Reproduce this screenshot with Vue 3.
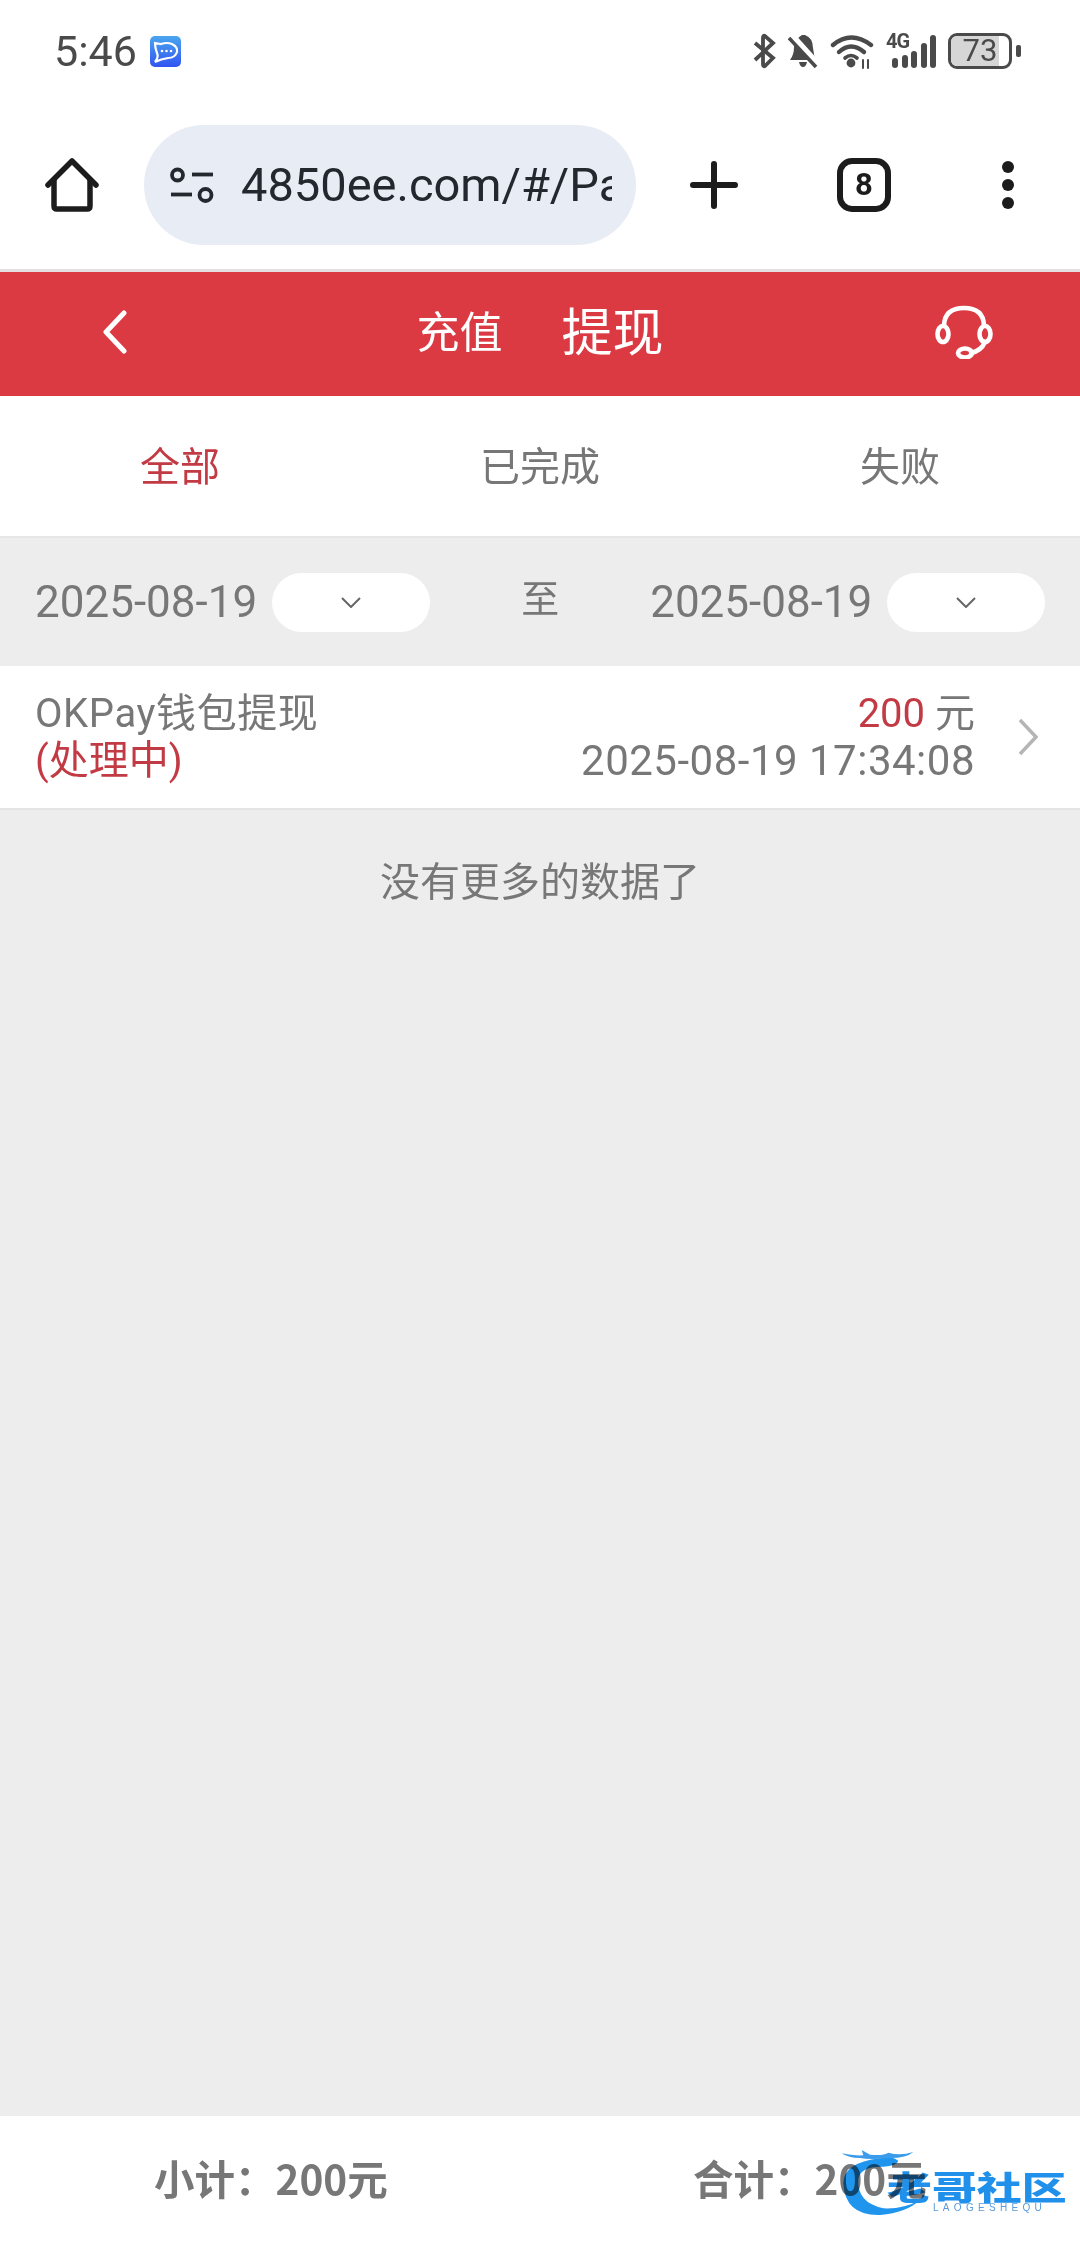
<script setup>
const tabs = [
  { label: '全部', active: true },
  { label: '已完成', active: false },
  { label: '失败', active: false },
]
const bars = [10, 13, 17, 25, 33]
</script>

<template>
  <div class="page">
    <div class="status">
      <div class="status-left">
        <span class="time">5:46</span>
        <svg class="app-icon" width="31" height="31" viewBox="0 0 31 31">
          <defs>
            <linearGradient id="ag" x1="0" y1="0" x2="0" y2="1">
              <stop offset="0" stop-color="#4aa6ee" />
              <stop offset="1" stop-color="#3254f2" />
            </linearGradient>
          </defs>
          <rect width="31" height="31" rx="5" fill="url(#ag)" />
          <path d="M5 7 L11 8 Q17 6 22 8 Q28 11 27 16 Q25 22 18 22 Q11 23 5 26 Q9 21 7 17 Q5 12 5 7Z" fill="none" stroke="#fff" stroke-width="2.2" />
          <circle cx="12" cy="15" r="1.3" fill="#fff" /><circle cx="16.5" cy="15" r="1.3" fill="#fff" /><circle cx="21" cy="15" r="1.3" fill="#fff" />
        </svg>
      </div>
      <div class="status-right">
        <svg width="23" height="36" viewBox="0 0 23 36" fill="none" stroke="#4a4a4a" stroke-width="3.8">
          <path d="M2 10 L20 25 L12 33 Q10 34 10 31 V5 Q10 2 12 3 L20 10 L2 27" />
        </svg>
        <svg width="30" height="36" viewBox="0 0 30 36">
          <path d="M14 2 L17 2 Q25 5 25 15 L27 27 H2 Q6 22 6 14 Q7 6 14 2Z" fill="#4a4a4a" />
          <path d="M11 29 H19 Q18 34 15 34 Q12 34 11 29Z" fill="#4a4a4a" />
          <path d="M3 2 L30 32" stroke="#fff" stroke-width="7" />
          <path d="M1 5 L28 34" stroke="#4a4a4a" stroke-width="3.6" />
        </svg>
        <svg width="44" height="36" viewBox="0 0 44 36" fill="none" stroke="#4a4a4a" stroke-width="4.4" stroke-linecap="round">
          <path d="M3 12 Q21 -3 41 12" />
          <path d="M9 19 Q21 8 34 19" />
          <path d="M15 25 Q21 20 27 25" stroke-width="3.6" />
          <circle cx="21" cy="30" r="4.4" fill="#4a4a4a" stroke="none" />
          <path d="M33 27 V35 M38 27 V35" stroke-width="2" />
        </svg>
        <div class="signal">
          <span class="net">4G</span>
          <i v-for="b in bars" :key="b" :style="{ height: b + 'px' }"></i>
        </div>
        <div class="battery">
          <div class="battery-body">
            <div class="battery-fill"></div>
            <span class="battery-num">73</span>
          </div>
          <div class="battery-tip"></div>
        </div>
      </div>
    </div>

    <div class="browser">
      <svg class="home" width="54" height="54" viewBox="0 0 54 54" fill="none" stroke="#1c1c1c" stroke-width="5.5" stroke-linejoin="round" stroke-linecap="round">
        <path d="M3 27 L27 3 L51 27" />
        <path d="M9 22 V48 Q9 51 12 51 H42 Q45 51 45 48 V22" />
      </svg>
      <div class="url">
        <svg width="44" height="36" viewBox="0 0 44 36" fill="none" stroke="#23282e" stroke-width="3.8">
          <circle cx="7.5" cy="8" r="5.5" />
          <circle cx="35.5" cy="28" r="6" />
          <path d="M22 7.5 H43" />
          <path d="M1 27.5 H22" />
        </svg>
        <span class="url-text">4850ee.com/#/Pa</span>
      </div>
      <svg class="plus" width="48" height="48" viewBox="0 0 48 48" stroke="#1c1c1c" stroke-width="6" stroke-linecap="round">
        <path d="M3 24 H45 M24 3 V45" />
      </svg>
      <div class="tabs-count">8</div>
      <div class="dots"><i></i><i></i><i></i></div>
    </div>

    <div class="nav">
      <svg class="back" width="24" height="44" viewBox="0 0 24 44" fill="none" stroke="#fff" stroke-width="5" stroke-linecap="round" stroke-linejoin="round">
        <path d="M21 3 L3 22 L21 41" />
      </svg>
      <div class="nav-titles">
        <span class="nav-sub">充值</span>
        <span class="nav-main">提现</span>
      </div>
      <svg class="headset" width="58" height="54" viewBox="0 0 58 54" fill="none" stroke="#fff" stroke-width="4.6" stroke-linecap="round">
        <path d="M9 20 Q10 3 29 3 Q48 3 49 20" />
        <ellipse cx="8" cy="29" rx="5.5" ry="8" />
        <ellipse cx="50" cy="29" rx="5.5" ry="8" />
        <path d="M50 37 Q46 46 36 48" />
        <ellipse cx="30" cy="48" rx="7" ry="4.5" />
      </svg>
    </div>

    <div class="tabs">
      <div v-for="t in tabs" :key="t.label" class="tab" :class="{ active: t.active }">{{ t.label }}</div>
    </div>

    <div class="filter">
      <span class="date">2025-08-19</span>
      <div class="select"><svg width="20" height="11" viewBox="0 0 20 11" fill="none" stroke="#666" stroke-width="2"><path d="M1 1 L10 10 L19 1" /></svg></div>
      <span class="to">至</span>
      <span class="date">2025-08-19</span>
      <div class="select"><svg width="20" height="11" viewBox="0 0 20 11" fill="none" stroke="#666" stroke-width="2"><path d="M1 1 L10 10 L19 1" /></svg></div>
    </div>

    <div class="row">
      <div class="row-left">
        <div class="row-title">OKPay钱包提现</div>
        <div class="red">(处理中)</div>
      </div>
      <div class="row-right">
        <div><span class="red">200</span> 元</div>
        <div class="stamp">2025-08-19 17:34:08</div>
      </div>
      <svg class="chev" width="20" height="38" viewBox="0 0 20 38" fill="none" stroke="#b5b5b5" stroke-width="3.5">
        <path d="M2 2 L18 19 L2 36" />
      </svg>
    </div>

    <div class="nomore">没有更多的数据了</div>

    <div class="footer">
      <span class="sum s-left">小计：200元</span>
      <span class="sum s-right">合计：200元</span>
      <div class="mark">
        <svg class="mark-logo" width="90" height="75" viewBox="0 0 270 225">
          <path d="M120 37 Q10 50 10 112 Q15 210 120 207 Q200 200 240 162 Q190 190 130 187 Q50 170 55 100 Q60 60 130 62 Q170 60 175 45 Q160 30 120 37Z" fill="#1f95ee" />
          <path d="M5 22 Q40 30 70 28 L65 12 L90 26 Q130 30 145 20 Q180 30 220 18 Q200 36 150 36 Q90 42 60 36 Q25 36 5 22Z" fill="#3a9cea" />
        </svg>
        <div class="mark-text">
          <span class="mark-cn">老哥社区</span>
          <span class="mark-en">LAOGESHEQU</span>
        </div>
      </div>
    </div>
  </div>
</template>

<style scoped>
.page {
  width: 1080px;
  height: 2244px;
  background: #ededed;
  display: flex;
  flex-direction: column;
  font-family: Roboto, "Noto Sans CJK SC", sans-serif;
  overflow: hidden;
}
.status {
  height: 100px;
  background: #fff;
  display: flex;
  justify-content: space-between;
  align-items: center;
  padding: 2px 59px 0 54px;
  box-sizing: border-box;
  flex: none;
}
.status-left { display: flex; align-items: center; gap: 13px; }
.time { font-size: 43px; color: #4a4a4a; line-height: 48px; }
.status-right { display: flex; align-items: center; gap: 12px; }
.signal { display: flex; align-items: flex-end; gap: 3.5px; height: 34px; position: relative; width: 50px; justify-content: flex-end; }
.signal i { width: 6px; background: #4a4a4a; border-radius: 3px; display: block; }
.net { position: absolute; left: 0; top: -3px; font-weight: 700; font-size: 20px; line-height: 20px; letter-spacing: -1px; color: #4a4a4a; }
.battery { display: flex; align-items: center; gap: 4px; }
.battery-body { width: 64px; height: 36px; border: 3px solid #4a4a4a; border-radius: 9px; box-sizing: border-box; position: relative; overflow: hidden; display: flex; align-items: center; justify-content: center; }
.battery-fill { position: absolute; left: 0; top: 0; bottom: 0; width: 83%; background: #d6d6d6; }
.battery-num { position: relative; font-size: 31px; line-height: 30px; color: #4a4a4a; }
.battery-tip { width: 5px; height: 12px; background: #4a4a4a; border-radius: 2px; }

.browser {
  height: 172px;
  background: #fff;
  display: flex;
  align-items: center;
  padding-left: 45px;
  box-sizing: border-box;
  border-bottom: 3px solid #e6dfe2;
  flex: none;
}
.home { flex: none; }
.url {
  width: 492px;
  height: 120px;
  margin-left: 45px;
  border-radius: 60px;
  background: #e8ecf4;
  display: flex;
  align-items: center;
  padding: 0 24px 0 26px;
  box-sizing: border-box;
  gap: 27px;
  flex: none;
}
.url svg { flex: none; }
.url-text { font-size: 47px; color: #23282e; white-space: nowrap; overflow: hidden; }
.plus { margin-left: 54px; flex: none; }
.tabs-count {
  margin-left: 99px;
  width: 54px;
  height: 54px;
  border: 6px solid #1c1c1c;
  border-radius: 15px;
  box-sizing: border-box;
  display: flex;
  align-items: center;
  justify-content: center;
  font-weight: 700;
  font-size: 31px;
  line-height: 1;
  color: #1c1c1c;
  flex: none;
}
.dots { margin-left: 111px; display: flex; flex-direction: column; gap: 6px; flex: none; }
.dots i { width: 12px; height: 12px; border-radius: 50%; background: #1c1c1c; display: block; }

.nav {
  height: 124px;
  background: #dc3a43;
  position: relative;
  display: flex;
  align-items: center;
  justify-content: center;
  padding-bottom: 10px;
  box-sizing: border-box;
  flex: none;
}
.back { position: absolute; left: 103px; top: 38px; }
.headset { position: absolute; left: 935px; top: 33px; }
.nav-titles { display: flex; align-items: center; color: #fff; gap: 59px; font-family: "Noto Sans CJK SC", sans-serif; }
.nav-sub { font-size: 43px; line-height: 60px; }
.nav-main { font-size: 51px; line-height: 60px; }

.tabs {
  height: 142px;
  background: #fff;
  display: grid;
  grid-template-columns: repeat(3, 1fr);
  padding-bottom: 4px;
  flex: none;
  border-bottom: 2px solid #e6e6e6;
  box-sizing: border-box;
}
.tab { display: flex; align-items: center; justify-content: center; font-size: 40px; color: #777; font-family: "Noto Sans CJK SC", sans-serif; }
.tab.active { color: #c23a44; }

.filter {
  height: 128px;
  display: flex;
  align-items: center;
  padding-left: 35px;
  color: #777;
  flex: none;
  box-sizing: border-box;
}
.date { font-size: 44px; white-space: nowrap; }
.select { width: 158px; height: 59px; background: #fff; border-radius: 30px; margin-left: 15px; display: flex; align-items: center; justify-content: center; }
.to { width: 220px; text-align: center; font-size: 38px; margin-top: -14px; font-family: "Noto Sans CJK SC", sans-serif; }

.row {
  height: 144px;
  background: #fff;
  display: flex;
  align-items: center;
  padding: 0 42px 0 35px;
  box-sizing: border-box;
  font-size: 40px;
  line-height: 47px;
  color: #777;
  border-bottom: 2px solid #e4e4e4;
  flex: none;
}
.row-left { flex: 1; }
.row-title { letter-spacing: 0.6px; }
.row-right { text-align: right; }
.stamp { font-size: 42px; letter-spacing: 0.5px; }
.red { color: #c23a44; }
.chev { margin-left: 43px; }

.nomore { text-align: center; font-size: 40px; color: #777; padding-top: 40px; line-height: 58px; flex: 1; font-family: "Noto Sans CJK SC", sans-serif; }

.footer {
  height: 128px;
  background: #fff;
  position: relative;
  flex: none;
}
.sum { font-size: 40.5px; font-weight: 700; color: #777; position: absolute; top: 37px; line-height: 50px; font-family: "Noto Sans CJK SC", sans-serif; }
.s-left { left: 154px; }
.s-right { left: 693px; }
.mark { position: absolute; left: 840px; top: 30px; width: 240px; height: 80px; mix-blend-mode: multiply; }
.mark-logo { position: absolute; left: 0; top: 0; }
.mark-text { position: absolute; left: 47px; top: 22px; display: flex; flex-direction: column; align-items: flex-start; }
.mark-cn { font-family: "Noto Sans CJK SC", sans-serif; font-size: 33px; font-weight: 900; line-height: 36px; color: #2190ea; transform: scaleX(1.36); transform-origin: left center; white-space: nowrap; }
.mark-en { font-family: "Liberation Sans", sans-serif; font-size: 10px; line-height: 12px; color: #5a9ad8; letter-spacing: 4.3px; margin-left: 46px; margin-top: -2px; white-space: nowrap; }
</style>

<style>
html, body { margin: 0; padding: 0; }
</style>
